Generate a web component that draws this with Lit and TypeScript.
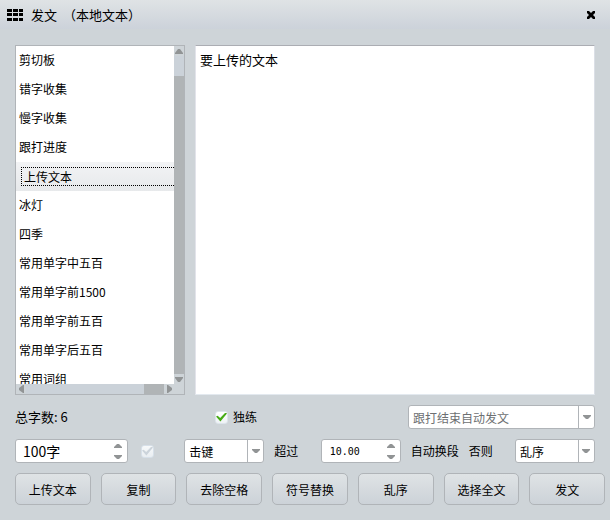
import { LitElement, html, css, svg } from "lit";
import { customElement, property, state } from "lit/decorators.js";
import { classMap } from "lit/directives/class-map.js";

const controlStyles = css`
  * {
    box-sizing: border-box;
  }
  button,
  input,
  select,
  textarea {
    font-family: inherit;
    color: inherit;
    margin: 0;
    outline: none;
  }
  .arrow {
    display: block;
    fill: #919495;
  }
`;

const arrowUp = html`<svg class="arrow" width="8" height="5" viewBox="0 0 8 5" aria-hidden="true">${svg`<path d="M3 0h2l3 4v1H0V4z"/>`}</svg>`;
const arrowDown = html`<svg class="arrow" width="8" height="5" viewBox="0 0 8 5" aria-hidden="true">${svg`<path d="M0 0h8v1L5 5H3L0 1z"/>`}</svg>`;
const smallUp = html`<svg class="arrow" width="8" height="4" viewBox="0 0 8 4" aria-hidden="true">${svg`<path d="M3 0h2l3 3v1H0V3z"/>`}</svg>`;
const smallDown = html`<svg class="arrow" width="8" height="4" viewBox="0 0 8 4" aria-hidden="true">${svg`<path d="M0 0h8v1L5 4H3L0 1z"/>`}</svg>`;
const arrowLeft = html`<svg class="arrow" width="5" height="8" viewBox="0 0 5 8" aria-hidden="true">${svg`<path d="M5 0v8H4L0 5V3l4-3z"/>`}</svg>`;
const arrowRight = html`<svg class="arrow" width="5" height="8" viewBox="0 0 5 8" aria-hidden="true">${svg`<path d="M0 0h1l4 3v2L1 8H0z"/>`}</svg>`;

@customElement("combo-box")
export class ComboBox extends LitElement {
  @property() label = "";
  @property({ type: Array }) options: string[] = [];
  @property({ type: Boolean }) disabled = false;

  static styles = [
    controlStyles,
    css`
      :host {
        display: block;
      }
      .field {
        display: grid;
        grid-template-columns: 1fr 16px;
        height: 24px;
        border: 1px solid #b0b4b8;
        border-radius: 3px;
        background: #fff;
      }
      .select {
        grid-area: 1 / 1 / 2 / 3;
        appearance: none;
        width: 100%;
        height: 22px;
        padding: 0 20px 0 4px;
        border: 0;
        background: transparent;
        font-size: 12px;
      }
      .select:disabled {
        color: #6d7072;
        opacity: 1;
      }
      .drop {
        grid-area: 1 / 2;
        display: grid;
        place-items: center;
        border-left: 1px solid #b0b4b8;
        pointer-events: none;
      }
    `,
  ];

  render() {
    return html`
      <div class="field">
        <select class="select" aria-label=${this.label} ?disabled=${this.disabled}>
          ${this.options.map((o) => html`<option>${o}</option>`)}
        </select>
        <span class="drop">${smallDown}</span>
      </div>
    `;
  }
}

@customElement("spin-box")
export class SpinBox extends LitElement {
  @property() label = "";
  @property({ type: Number }) amount = 0;
  @property({ type: Number }) step = 1;
  @property({ type: Number }) digits = 0;
  @property() suffix = "";

  static styles = [
    controlStyles,
    css`
      :host {
        display: block;
      }
      .field {
        display: flex;
        height: 24px;
        border: 1px solid #b0b4b8;
        border-radius: 3px;
        background: #fff;
      }
      .input {
        flex: 1;
        min-width: 0;
        padding: 0 0 0 7px;
        border: 0;
        background: transparent;
        font-size: 14px;
      }
      .fixed {
        padding-left: 8px;
        font-family: "DejaVu Sans Mono", monospace;
        font-size: 10px;
      }
      .steps {
        display: flex;
        flex-direction: column;
        width: 18px;
      }
      .step {
        flex: 1;
        display: grid;
        place-items: center;
        padding: 0;
        border: 0;
        background: transparent;
      }
    `,
  ];

  private change(direction: number) {
    this.amount += direction * this.step;
  }

  render() {
    return html`
      <div class="field">
        <input
          class=${classMap({ input: true, fixed: this.digits > 0 })}
          type="text"
          aria-label=${this.label}
          .value=${this.amount.toFixed(this.digits) + this.suffix}
        />
        <div class="steps">
          <button class="step" type="button" aria-label="增加" @click=${() => this.change(1)}>${smallUp}</button>
          <button class="step" type="button" aria-label="减少" @click=${() => this.change(-1)}>${smallDown}</button>
        </div>
      </div>
    `;
  }
}

@customElement("app-root")
export class AppRoot extends LitElement {
  @state() private selected = 4;

  private items = [
    "剪切板",
    "错字收集",
    "慢字收集",
    "跟打进度",
    "上传文本",
    "冰灯",
    "四季",
    "常用单字中五百",
    "常用单字前1500",
    "常用单字前五百",
    "常用单字后五百",
    "常用词组",
  ];

  private actions = ["上传文本", "复制", "去除空格", "符号替换", "乱序", "选择全文", "发文"];

  static styles = [
    controlStyles,
    css`
      :host {
        display: flex;
        flex-direction: column;
        min-height: 100vh;
        box-sizing: border-box;
        background: #ced4d8;
        color: #000;
        font-family: "Noto Sans CJK SC", sans-serif;
        font-size: 12px;
        line-height: 18px;
      }
      .titlebar {
        display: flex;
        align-items: center;
        gap: 8px;
        height: 29px;
        padding: 0 14px 0 7px;
        background: linear-gradient(#dfe3e5, #ccd2da);
      }
      .title {
        flex: 1;
        display: flex;
        gap: 6px;
        margin: 0;
        font-size: 13px;
        font-weight: 400;
      }
      .close {
        display: grid;
        padding: 0;
        border: 0;
        background: none;
      }
      .content {
        flex: 1;
        display: flex;
        flex-direction: column;
        gap: 10px;
        padding: 16px 15px 10px;
      }
      .panes {
        flex: 1;
        display: flex;
        gap: 10px;
        min-height: 350px;
      }
      .listbox {
        display: grid;
        grid-template: minmax(0, 1fr) 10px / minmax(0, 1fr) 10px;
        flex: 0 0 170px;
        height: 350px;
        border: 1px solid #b0b4b8;
        background: #ced4d8;
      }
      .list {
        margin: 0;
        padding: 0;
        list-style: none;
        overflow: hidden;
        background: #fff;
      }
      .item {
        height: 29px;
        padding: 4px 0 6px 3px;
        line-height: 19px;
        white-space: nowrap;
      }
      .item.current {
        padding: 5px 0 5px 5px;
        background: linear-gradient(#f2f3f5, #e7e9eb);
      }
      .current .name {
        display: block;
        height: 19px;
        padding-left: 2px;
        border: 1px dotted #000;
        border-right: 0;
        line-height: 17px;
      }
      .vbar {
        display: grid;
        grid-template-rows: 10px 20px 1fr 10px;
      }
      .hbar {
        grid-column: 1 / 3;
        display: grid;
        grid-template-columns: 10px 1fr 20px 20px;
      }
      .cap {
        display: grid;
        place-items: center;
      }
      .cap.end {
        justify-items: start;
        padding-left: 3px;
      }
      .light {
        background: #cbd2d9;
      }
      .dark {
        background: #b0b4b6;
      }
      .editor {
        flex: 1;
        min-width: 0;
        padding: 4px;
        border: 1px solid;
        border-color: #abadb3 #dbdfe6 #e3e9ef #e2e3ea;
        background: #fff;
        font-size: 13px;
        line-height: 20px;
        resize: none;
      }
      .status {
        display: grid;
        grid-template-columns: 200px 1fr 187px;
        align-items: center;
      }
      .total {
        font-size: 13px;
      }
      .check {
        display: flex;
        align-items: center;
        gap: 5px;
      }
      .box {
        appearance: none;
        display: grid;
        place-items: center;
        width: 13px;
        height: 13px;
        border: 1px solid #dde5ec;
        border-radius: 3px;
        background: linear-gradient(#ffffff, #eef2f5);
      }
      .box::before {
        content: "";
        width: 11px;
        height: 9px;
        clip-path: polygon(0 45%, 15% 35%, 38% 62%, 86% 0, 100% 12%, 40% 100%);
      }
      .box:checked::before {
        background: #46ab16;
      }
      .box:disabled {
        border-color: #d7e0e9;
        background: linear-gradient(#f7f9fa, #e9eef2);
      }
      .box:disabled::before {
        background: #ccd4db;
      }
      .settings {
        display: flex;
        align-items: center;
        justify-content: space-between;
      }
      .group {
        display: flex;
        align-items: center;
        gap: 10px;
        white-space: nowrap;
      }
      .group.first {
        gap: 13px;
        padding-right: 8px;
      }
      .short {
        width: 80px;
      }
      .wide {
        width: 113px;
      }
      .actions {
        display: grid;
        grid-template-columns: repeat(7, minmax(0, 1fr));
        gap: 10px;
        padding: 0 5px 15px 15px;
      }
      .action {
        height: 32px;
        padding: 0;
        border: 1px solid #b0b4b8;
        border-radius: 5px;
        background: linear-gradient(#dfe3e5, #ccd2d8);
        font-size: 12px;
      }
    `,
  ];

  render() {
    return html`
      <header class="titlebar">
        <svg width="16" height="12" viewBox="0 0 16 12" aria-hidden="true">
          ${[0, 6, 12].map((x) => [0, 4, 9].map((y) => svg`<rect x=${x} y=${y} width=${x === 12 ? 4 : 5} height="3"/>`))}
        </svg>
        <h1 class="title"><span>发文</span> <span>（本地文本）</span></h1>
        <button class="close" type="button" aria-label="关闭">
          <svg width="10" height="8" viewBox="0 0 10 8" aria-hidden="true">
            <path d="M1 0h2l2 2 2-2h2v2L7 4l2 2v2H7L5 6 3 8H1V6l2-2-2-2z" />
          </svg>
        </button>
      </header>

      <main class="content">
        <section class="panes">
          <div class="listbox">
            <ul class="list" role="listbox" aria-label="文本列表">
              ${this.items.map(
                (name, i) => html`
                  <li
                    class=${classMap({ item: true, current: i === this.selected })}
                    role="option"
                    aria-selected=${i === this.selected ? "true" : "false"}
                    @click=${() => (this.selected = i)}
                  ><span class="name">${name}</span></li>
                `
              )}
            </ul>
            <div class="vbar" aria-hidden="true">
              <span class="cap">${arrowUp}</span>
              <span class="light"></span>
              <span class="dark"></span>
              <span class="cap">${arrowDown}</span>
            </div>
            <div class="hbar" aria-hidden="true">
              <span class="cap">${arrowLeft}</span>
              <span class="light"></span>
              <span class="dark"></span>
              <span class="cap end">${arrowRight}</span>
            </div>
          </div>
          <textarea class="editor" aria-label="文本内容" spellcheck="false" .value=${"要上传的文本"}></textarea>
        </section>

        <section class="status">
          <span class="total">总字数: 6</span>
          <label class="check"><input class="box" type="checkbox" checked />独练</label>
          <combo-box label="发文方式" disabled .options=${["跟打结束自动发文"]}></combo-box>
        </section>

        <section class="settings">
          <div class="group first">
            <spin-box class="wide" label="字数" .amount=${100} suffix="字"></spin-box>
            <input class="box" type="checkbox" aria-label="启用自动换段" disabled />
          </div>
          <div class="group">
            <combo-box class="short" label="条件" .options=${["击键", "速度"]}></combo-box>
            <span>超过</span>
          </div>
          <div class="group">
            <spin-box class="short" label="超过" .amount=${10} .digits=${2}></spin-box>
            <span>自动换段</span>
            <span>否则</span>
          </div>
          <combo-box class="short" label="否则" .options=${["乱序", "重打"]}></combo-box>
        </section>
      </main>

      <footer class="actions">
        ${this.actions.map((name) => html`<button class="action" type="button">${name}</button>`)}
      </footer>
    `;
  }
}
